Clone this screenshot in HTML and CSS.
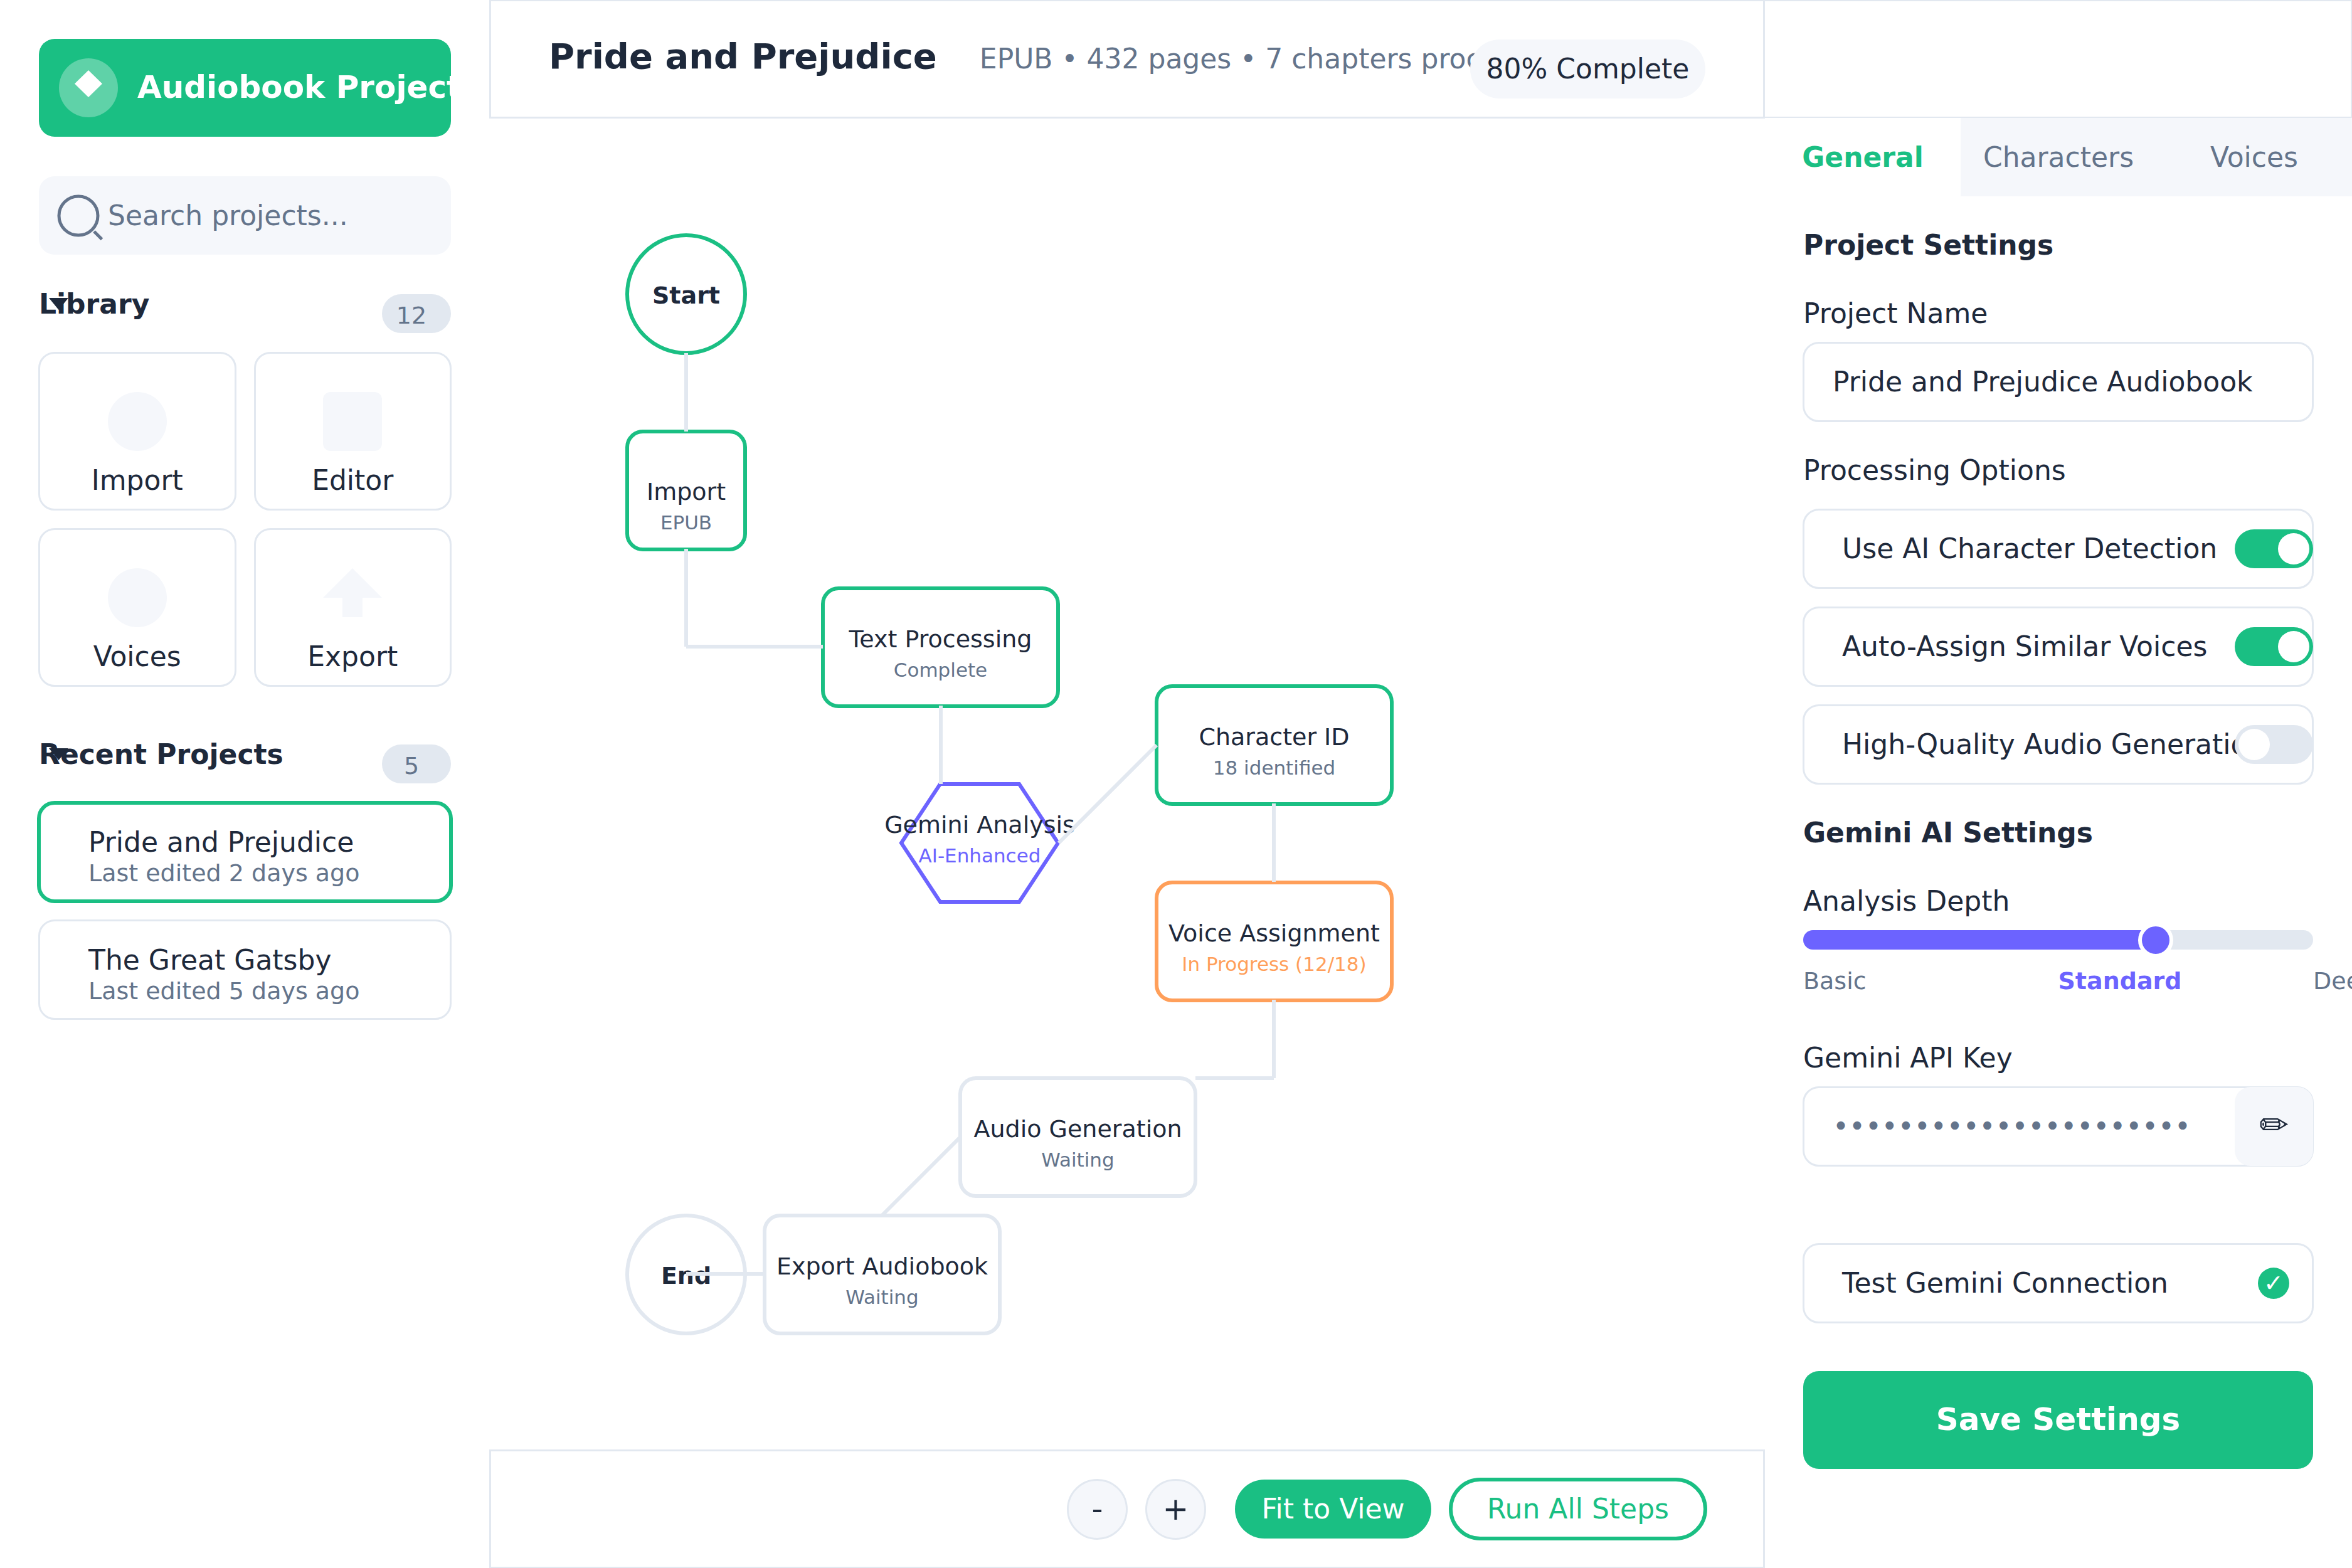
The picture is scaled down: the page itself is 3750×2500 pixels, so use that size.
FILE: index.html
```html
<!DOCTYPE html>
<html lang="en">
<head>
<meta charset="utf-8">
<title>Audiobook Projects</title>
<link rel="stylesheet" href="styles.css">
</head>
<body>
<div class="app">
  <aside class="sidebar">
    <div class="brand">
      <span class="brand-logo">
        <svg viewBox="0 0 94 94" aria-hidden="true"><path d="M47 19 69 40.500 47 62 25 40.500Z" fill="#fff"/></svg>
      </span>
      <h1 class="brand-name">Audiobook Projects</h1>
    </div>
    <label class="search">
      <svg class="search-icon" viewBox="0 0 80 80" aria-hidden="true">
        <circle cx="38" cy="40" r="31"/>
        <path d="M63 65 75.500 77.500"/>
      </svg>
      <input class="search-input" type="search" placeholder="Search projects..." aria-label="Search projects">
    </label>
    <div class="section-head">
      <h2 class="section-title">Library<svg class="caret" viewBox="0 0 31 19" aria-hidden="true"><path d="M0 0H31L15.500 19Z"/></svg></h2>
      <span class="count">12</span>
    </div>
    <div class="library">
      <button class="tile" type="button">
        <svg class="tile-icon" viewBox="0 0 94 94" aria-hidden="true"><circle cx="47" cy="47" r="47"/></svg>
        <span>Import</span>
      </button>
      <button class="tile" type="button">
        <svg class="tile-icon" viewBox="0 0 94 94" aria-hidden="true"><rect width="94" height="94" rx="12"/></svg>
        <span>Editor</span>
      </button>
      <button class="tile" type="button">
        <svg class="tile-icon" viewBox="0 0 94 94" aria-hidden="true"><circle cx="47" cy="47" r="47"/></svg>
        <span>Voices</span>
      </button>
      <button class="tile" type="button">
        <svg class="tile-icon" viewBox="0 0 94 94" aria-hidden="true"><path d="M47 0 94 47H63V78H31V47H0Z"/></svg>
        <span>Export</span>
      </button>
    </div>
    <div class="section-head section-head-recent">
      <h2 class="section-title">Recent Projects<svg class="caret" viewBox="0 0 31 19" aria-hidden="true"><path d="M0 0H31L15.500 19Z"/></svg></h2>
      <span class="count">5</span>
    </div>
    <div class="recent">
      <button class="project project-active" type="button">
        <span class="project-name">Pride and Prejudice</span>
        <span class="project-date">Last edited 2 days ago</span>
      </button>
      <button class="project" type="button">
        <span class="project-name">The Great Gatsby</span>
        <span class="project-date">Last edited 5 days ago</span>
      </button>
    </div>
  </aside>

  <main class="main">
    <header class="topbar">
      <h2 class="doc-title">Pride and Prejudice</h2>
      <p class="doc-meta">EPUB • 432 pages • 7 chapters processed</p>
      <span class="progress-pill">80% Complete</span>
    </header>

    <section class="canvas" aria-label="Workflow">
      <div class="node node-round node-done node-start"><b class="node-label">Start</b></div>
      <div class="node node-small node-done node-import"><span class="node-label">Import</span><span class="node-sub">EPUB</span></div>
      <div class="node node-done node-text"><span class="node-label">Text Processing</span><span class="node-sub">Complete</span></div>
      <div class="node-hex">
        <svg class="hex-shape" viewBox="0 0 250 188" aria-hidden="true"><path d="M62 0H188L250 94 188 188H62L0 94Z"/></svg>
        <span class="node-label">Gemini Analysis</span><span class="node-sub">AI-Enhanced</span>
      </div>
      <div class="node node-done node-character"><span class="node-label">Character ID</span><span class="node-sub">18 identified</span></div>
      <div class="node node-active node-voice"><span class="node-label">Voice Assignment</span><span class="node-sub">In Progress (12/18)</span></div>
      <div class="node node-audio"><span class="node-label">Audio Generation</span><span class="node-sub">Waiting</span></div>
      <div class="node node-export"><span class="node-label">Export Audiobook</span><span class="node-sub">Waiting</span></div>
      <div class="node node-round node-end"><b class="node-label">End</b></div>
      <svg class="links" aria-hidden="true">
        <path d="M314 374V499"/>
        <path d="M314 686V842"/>
        <path d="M314 842H532"/>
        <path d="M720 936V1061"/>
        <path d="M908 1155 1064 999"/>
        <path d="M1251 1092V1217"/>
        <path d="M1251 1405V1530"/>
        <path d="M1251 1530H1126"/>
        <path d="M751 1624 626 1749"/>
        <path d="M439 1842H314"/>
      </svg>
    </section>

    <footer class="toolbar">
      <div class="zoom">
        <button class="zoom-btn" type="button" aria-label="Zoom out">-</button>
        <button class="zoom-btn" type="button" aria-label="Zoom in">+</button>
      </div>
      <button class="pill-btn" type="button">Fit to View</button>
      <button class="pill-btn pill-btn-outline" type="button">Run All Steps</button>
    </footer>
  </main>

  <aside class="panel">
    <div class="panel-top"></div>
    <nav class="tabs">
      <button class="tab tab-active" type="button">General</button>
      <button class="tab" type="button">Characters</button>
      <button class="tab" type="button">Voices</button>
    </nav>
    <form class="settings">
      <h3 class="group-title">Project Settings</h3>
      <label class="field-label" for="project-name">Project Name</label>
      <div class="field"><input class="field-input" id="project-name" type="text" value="Pride and Prejudice Audiobook"></div>
      <p class="field-label options-label">Processing Options</p>
      <div class="options">
        <label class="field option">Use AI Character Detection<input class="toggle" type="checkbox" checked></label>
        <label class="field option">Auto-Assign Similar Voices<input class="toggle" type="checkbox" checked></label>
        <label class="field option">High-Quality Audio Generation<input class="toggle" type="checkbox"></label>
      </div>
      <h3 class="group-title group-title-ai">Gemini AI Settings</h3>
      <label class="field-label" for="depth">Analysis Depth</label>
      <input class="slider" id="depth" type="range" min="0" max="1000" value="706">
      <div class="scale">
        <span>Basic</span>
        <b class="scale-current">Standard</b>
        <span>Deep</span>
      </div>
      <label class="field-label key-label" for="api-key">Gemini API Key</label>
      <div class="field">
        <input class="field-input key-input" id="api-key" type="password" value="abcdefghijklmnopqrstuv">
        <button class="edit-btn" type="button" aria-label="Edit key">✏</button>
      </div>
      <button class="field test-btn" type="button">Test Gemini Connection<span class="status">✓</span></button>
      <button class="save-btn" type="submit">Save Settings</button>
    </form>
  </aside>
</div>
</body>
</html>
```
FILE: styles.css
```css
:root {
  --green: #1abf83;
  --purple: #6c63ff;
  --orange: #ff9f5a;
  --ink: #1e293b;
  --muted: #64748b;
  --line: #e2e8f0;
  --soft: #f5f7fb;
}

* { box-sizing: border-box; }

body,
h1,
h2,
h3,
p { margin: 0; }

body {
  background: #fff;
  color: var(--ink);
  font-family: "DejaVu Sans", sans-serif;
  font-size: 44px;
  line-height: 50px;
}

button,
input {
  margin: 0;
  padding: 0;
  border: 0;
  background: none;
  color: inherit;
  font: inherit;
}

.app {
  display: grid;
  grid-template-columns: 780px minmax(0, 1fr) 936px;
  min-height: 100vh;
}

/* Sidebar */
.sidebar { padding: 62px 61px 62px 62px; }

.brand {
  display: flex;
  align-items: center;
  gap: 31px;
  height: 156px;
  padding-left: 32px;
  border-radius: 25px;
  background: var(--green);
  color: #fff;
  overflow: hidden;
}

.brand-logo {
  flex: none;
  width: 94px;
  height: 94px;
  border-radius: 50%;
  background: rgba(255, 255, 255, 0.3);
}

.brand-logo svg { display: block; }

.brand-name {
  padding-bottom: 3px;
  font-size: 50px;
  white-space: nowrap;
}

.search {
  display: flex;
  align-items: center;
  gap: 5px;
  height: 125px;
  margin-top: 63px;
  padding: 0 25px;
  border-radius: 25px;
  background: var(--soft);
  color: var(--muted);
}

.search-icon {
  flex: none;
  width: 80px;
  height: 80px;
  fill: none;
  stroke: var(--muted);
  stroke-width: 5;
}

.search-input {
  flex: 1;
  min-width: 0;
  appearance: none;
  outline: 0;
}

.search-input::placeholder { color: var(--muted); opacity: 1; }

.section-head {
  display: flex;
  justify-content: space-between;
  align-items: flex-start;
  margin-top: 63px;
}

.section-head-recent { margin-top: 92px; }

.section-title {
  position: relative;
  font-size: 44px;
  line-height: 32px;
}

.caret {
  position: absolute;
  left: 16px;
  top: 6px;
  width: 31px;
  height: 19px;
  fill: var(--ink);
}

.count {
  display: flex;
  align-items: center;
  justify-content: center;
  width: 110px;
  height: 62px;
  padding: 5px 16px 0 0;
  border-radius: 31px;
  background: var(--line);
  color: var(--muted);
  font-size: 38px;
}

.library {
  display: grid;
  grid-template-columns: 1fr 1fr;
  gap: 28px;
  margin: 30px -1px 0;
}

.tile {
  display: flex;
  flex-direction: column;
  align-items: center;
  gap: 22px;
  height: 253px;
  padding-top: 61px;
  border: 3px solid var(--line);
  border-radius: 26px;
  background: #fff;
}

.tile-icon {
  width: 94px;
  height: 94px;
  fill: var(--soft);
}

.recent {
  display: flex;
  flex-direction: column;
  gap: 26px;
  margin-top: 28px;
}

.project {
  display: flex;
  flex-direction: column;
  height: 160px;
  margin: 0 -1px;
  padding: 37px 77px 0;
  border: 3px solid var(--line);
  border-radius: 26px;
  background: #fff;
  text-align: left;
}

.project-active {
  height: 163px;
  margin: 0 -3px;
  padding: 35px 76px 0;
  border: 6px solid var(--green);
  border-radius: 28px;
}

.project-date {
  color: var(--muted);
  font-size: 38px;
  line-height: 48px;
}

/* Main column */
.main {
  display: flex;
  flex-direction: column;
}

.topbar {
  position: relative;
  display: flex;
  align-items: baseline;
  gap: 68px;
  height: 189px;
  padding: 53px 92px 0;
  border: 3px solid var(--line);
  border-top-width: 2px;
  background: #fff;
  white-space: nowrap;
}

.doc-title {
  font-size: 56px;
  line-height: 70px;
}

.doc-meta {
  flex: 1;
  min-width: 0;
  overflow: hidden;
  color: var(--muted);
}

.progress-pill {
  position: absolute;
  top: 61px;
  right: 92px;
  display: flex;
  align-items: center;
  justify-content: center;
  width: 375px;
  height: 94px;
  border-radius: 47px;
  background: var(--soft);
}

.canvas {
  position: relative;
  flex: 1;
  min-height: 2000px;
  overflow: hidden;
}

.node,
.node-hex {
  position: absolute;
  display: flex;
  flex-direction: column;
  align-items: center;
  white-space: nowrap;
}

.node {
  width: 381px;
  height: 194px;
  padding-top: 53px;
  border: 6px solid var(--line);
  border-radius: 28px;
  background: #fff;
}

.node-round,
.node-small {
  width: 194px;
  padding-top: 68px;
}

.node-round { border-radius: 50%; }
.node-done { border-color: var(--green); }
.node-active { border-color: var(--orange); }

.node-label {
  font-size: 38px;
  line-height: 50px;
}

.node-sub {
  color: var(--muted);
  font-size: 31px;
  line-height: 48px;
}

.node-active .node-sub { color: var(--orange); }

.node-start { left: 217px; top: 183px; }
.node-import { left: 217px; top: 496px; }
.node-text { left: 529px; top: 746px; }
.node-character { left: 1061px; top: 902px; }
.node-voice { left: 1061px; top: 1215px; }
.node-audio { left: 748px; top: 1527px; }
.node-export { left: 436px; top: 1746px; }
.node-end { left: 217px; top: 1746px; }

.node-hex {
  left: 657px;
  top: 1061px;
  width: 250px;
  height: 188px;
  padding-top: 40px;
}

.node-hex .node-sub { color: var(--purple); }

.node-hex .node-label,
.node-hex .node-sub { position: relative; }

.hex-shape {
  position: absolute;
  inset: 0;
  overflow: visible;
  fill: #fff;
  stroke: var(--purple);
  stroke-width: 6;
}

.links {
  position: absolute;
  inset: 0;
  width: 100%;
  height: 100%;
  fill: none;
  stroke: var(--line);
  stroke-width: 6;
}

.toolbar {
  display: flex;
  align-items: center;
  justify-content: flex-end;
  gap: 28px;
  height: 189px;
  padding: 0 89px;
  border: 3px solid var(--line);
  border-bottom-width: 2px;
  background: #fff;
}

.zoom {
  display: flex;
  gap: 28px;
  margin-right: 18px;
}

.zoom-btn {
  width: 97px;
  height: 97px;
  border: 3px solid var(--line);
  border-radius: 50%;
  background: var(--soft);
  font-size: 50px;
}

.pill-btn {
  width: 313px;
  height: 94px;
  border-radius: 50px;
  background: var(--green);
  color: #fff;
}

.pill-btn-outline {
  width: 412px;
  height: 100px;
  border: 6px solid var(--green);
  background: #fff;
  color: var(--green);
}

/* Settings panel */
.panel { overflow: hidden; }

.panel-top {
  height: 188px;
  border: 2px solid var(--line);
  border-left: 0;
}

.tabs {
  display: grid;
  grid-template-columns: repeat(3, 1fr);
  height: 125px;
}

.tab {
  background: var(--soft);
  color: var(--muted);
}

.tab-active {
  background: #fff;
  color: var(--green);
  font-weight: bold;
}

.settings {
  display: flex;
  flex-direction: column;
  padding: 53px 62px 62px 61px;
}

.group-title {
  margin-bottom: 59px;
  font-size: 44px;
}

.group-title-ai { margin-top: 52px; }

.field {
  position: relative;
  display: flex;
  align-items: center;
  height: 128px;
  margin: 20px -1px 0;
  border: 3px solid var(--line);
  border-radius: 26px;
  background: #fff;
}

.field-input {
  flex: 1;
  min-width: 0;
  padding: 0 45px;
  outline: 0;
}

.options-label { margin-top: 52px; }

.options {
  display: flex;
  flex-direction: column;
  gap: 28px;
  margin-top: 36px;
}

.option {
  margin-top: 0;
  padding-left: 60px;
  white-space: nowrap;
}

.toggle {
  position: absolute;
  top: 30px;
  right: -2px;
  width: 125px;
  height: 62px;
  border-radius: 31px;
  background: var(--line);
  appearance: none;
}

.toggle::before {
  content: "";
  position: absolute;
  top: 6px;
  left: 6px;
  width: 50px;
  height: 50px;
  border-radius: 50%;
  background: #fff;
}

.toggle:checked { background: var(--green); }
.toggle:checked::before { left: 69px; }

.slider {
  width: 100%;
  height: 31px;
  margin-top: 21px;
  border-radius: 16px;
  background: linear-gradient(to right, var(--purple) 69%, var(--line) 69%);
  appearance: none;
}

.slider::-webkit-slider-thumb {
  width: 56px;
  height: 56px;
  border: 6px solid #fff;
  border-radius: 50%;
  background: var(--purple);
  appearance: none;
}

.scale {
  display: grid;
  grid-template-columns: 50% 50% 50%;
  margin-top: 27px;
  color: var(--muted);
  font-size: 38px;
  line-height: 46px;
}

.scale-current { color: var(--purple); }

.key-label { margin-top: 75px; }

.key-input { color: var(--muted); }

.edit-btn {
  position: absolute;
  top: -2px;
  right: -2px;
  bottom: -2px;
  width: 125px;
  padding-bottom: 4px;
  border-radius: 25px;
  background: var(--soft);
  font-size: 56px;
}

.test-btn {
  justify-content: space-between;
  margin-top: 122px;
  padding: 0 36px 0 60px;
}

.status {
  width: 50px;
  height: 50px;
  border-radius: 50%;
  background: var(--green);
  color: #fff;
  font-size: 38px;
  text-align: center;
}

.save-btn {
  height: 156px;
  margin-top: 76px;
  padding-bottom: 3px;
  border-radius: 25px;
  background: var(--green);
  color: #fff;
  font-size: 50px;
  font-weight: bold;
}
```
